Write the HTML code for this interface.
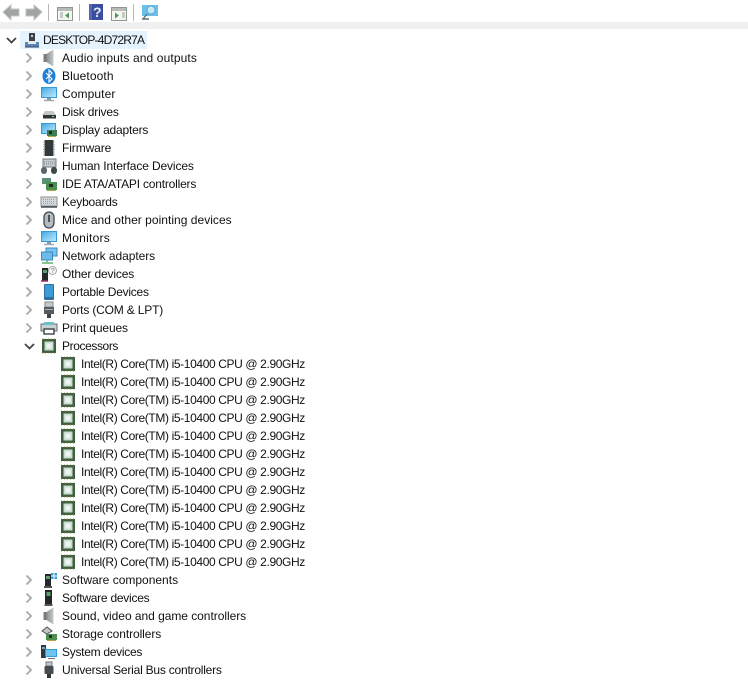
<!DOCTYPE html>
<html><head><meta charset="utf-8">
<style>
html,body{margin:0;padding:0;background:#fff;width:748px;height:693px;overflow:hidden}
body{position:relative;font-family:"Liberation Sans",sans-serif;font-size:12px;color:#111}
.t{position:absolute;height:18px;line-height:18px;white-space:nowrap}
.c{letter-spacing:-.375px}
svg{position:absolute;overflow:visible}
.i{width:18px;height:18px}
</style></head><body>
<svg width="0" height="0" style="position:absolute">
<defs>
<linearGradient id="blue" x1="0" y1="0" x2="1" y2="1"><stop offset="0" stop-color="#45a9e4"/><stop offset=".6" stop-color="#8fd2f4"/><stop offset="1" stop-color="#bfe6f8"/></linearGradient>
<linearGradient id="spk" x1="0" y1="0" x2="1" y2="0"><stop offset="0" stop-color="#8b9093"/><stop offset="1" stop-color="#c8cbcd"/></linearGradient>
<symbol id="chev" viewBox="0 0 10 18"><path d="M2.500 4.500l4.500 4.500-4.500 4.500" fill="none" stroke="#a8a8a8" stroke-width="1.800"/></symbol>
<symbol id="chevd" viewBox="0 0 14 18"><path d="M2 7l4.500 4.500L11 7" fill="none" stroke="#444" stroke-width="1.800"/></symbol>
<symbol id="cpu" viewBox="0 0 18 18"><rect x="2" y="2" width="14" height="14" fill="#3f5f3e"/><rect x="4.500" y="4.500" width="9" height="9" fill="#c9ddd2"/><rect x="6.500" y="6.500" width="5" height="5" fill="#eef5f0"/><path d="M2.500 1.500v1M5.500 1.500v1M8.500 1.500v1M11.500 1.500v1M14.500 1.500v1M2.500 15.500v1M5.500 15.500v1M8.500 15.500v1M11.500 15.500v1M14.500 15.500v1" stroke="#8a8a50"/></symbol>
<symbol id="speaker" viewBox="0 0 18 18"><path d="M3.500 5h3v8h-3z" fill="#777c7f"/><path d="M6.500 5l6-4h1v16h-1l-6-4z" fill="url(#spk)"/></symbol>
<symbol id="mon" viewBox="0 0 18 18"><rect x="1" y="2" width="16" height="11" fill="#3a98d2"/><rect x="2" y="3" width="14" height="9" fill="url(#blue)"/><path d="M7 13h4v2H7z" fill="#8a9aa4"/><path d="M4 15.500h10" stroke="#9aa8b0" stroke-width="1.400"/></symbol>
<symbol id="soft" viewBox="0 0 18 18"><rect x="5" y="1" width="7" height="14" fill="#23282a"/><rect x="6.500" y="3" width="4" height="4" fill="#5c9e6e"/><rect x="4.500" y="15" width="8" height="2" fill="#55595b"/></symbol>
</defs></svg>

<!-- toolbar -->
<div style="position:absolute;left:0;top:22px;width:748px;height:7px;background:#f0f0f0"></div>
<svg style="left:0;top:0" width="180" height="24">
<path d="M3 12l8-7v4h8v7h-8v4z" fill="#a0a3a3" stroke="#c4c6c6"/>
<path d="M42 12l-8-7v4h-8v7h8v4z" fill="#a0a3a3" stroke="#c4c6c6"/>
<path d="M48.500 4v17M79.500 4v17M133.500 4v17" stroke="#b8b8b8"/>
<rect x="57.500" y="7.500" width="15" height="13" fill="#f4f6f2" stroke="#8f9590"/><rect x="58" y="8" width="14" height="3" fill="#b9bdb9"/>
<path d="M60 13h3M60 15h3M60 17h3" stroke="#9aa09a"/><path d="M69 12.500v6l-4-3z" fill="#4f9a58"/>
<rect x="89" y="4" width="14" height="16" fill="#3a4e9e"/><rect x="89" y="4" width="3" height="16" fill="#5468b4"/>
<text x="93" y="17" font-family="Liberation Sans,sans-serif" font-size="14" font-weight="bold" fill="#e6ecf8">?</text>
<rect x="111.500" y="7.500" width="15" height="13" fill="#f4f6f2" stroke="#8f9590"/><rect x="112" y="8" width="14" height="3" fill="#b9bdb9"/>
<path d="M122 13h3M122 15h3M122 17h3" stroke="#9aa09a"/><path d="M115 12.500v6l4-3z" fill="#4f9a58"/>
<rect x="142" y="5" width="16" height="11" fill="#6cbfe8"/><circle cx="151" cy="10" r="4" fill="#c8e8f6" stroke="#5aa8d0"/><path d="M147 14l-4 5M142 19h7" stroke="#5c7478" stroke-width="1.400"/>
</svg>

<!-- root -->
<div style="position:absolute;left:20px;top:31px;width:127px;height:18px;background:#e5f3ff"></div>
<svg style="left:5px;top:31px" width="14" height="18"><use href="#chevd"/></svg>
<svg class="i" style="left:23px;top:31px" viewBox="0 0 18 18"><rect x="6" y="2" width="6" height="8" fill="#3a4246"/><rect x="8" y="4" width="2" height="2" fill="#c8ccce"/><rect x="2" y="11" width="14" height="5" fill="#5b87b8"/><rect x="5" y="10" width="8" height="3" fill="#e6e8ea"/><path d="M2 16h14" stroke="#2f4660"/></svg>
<div class="t" style="left:43px;top:31px;letter-spacing:-.8px">DESKTOP-4D72R7A</div>

<svg style="left:24px;top:49px" width="10" height="18"><use href="#chev"/></svg><svg class="i" style="left:40px;top:49px"><use href="#speaker" width="18" height="18"/></svg><div class="t" style="left:62px;top:49px;letter-spacing:.12px">Audio inputs and outputs</div>
<svg style="left:24px;top:67px" width="10" height="18"><use href="#chev"/></svg><svg class="i" style="left:40px;top:67px" viewBox="0 0 18 18"><ellipse cx="9" cy="9" rx="6.500" ry="8" fill="#1f80d6"/><path d="M6 6l6 6-3 3V3l3 3-6 6" fill="none" stroke="#fff" stroke-width="1.100"/></svg><div class="t" style="left:62px;top:67px;letter-spacing:.1px">Bluetooth</div>
<svg style="left:24px;top:85px" width="10" height="18"><use href="#chev"/></svg><svg class="i" style="left:40px;top:85px"><use href="#mon" width="18" height="18"/></svg><div class="t" style="left:62px;top:85px;letter-spacing:.1px">Computer</div>
<svg style="left:24px;top:103px" width="10" height="18"><use href="#chev"/></svg><svg class="i" style="left:40px;top:103px" viewBox="0 0 18 18"><path d="M5 8h8l3 4H2z" fill="#c2c6c8"/><rect x="3" y="12" width="13" height="3.500" fill="#2f3436"/><rect x="12" y="13" width="2" height="1" fill="#7fdc7f"/></svg><div class="t" style="left:62px;top:103px;letter-spacing:-.18px">Disk drives</div>
<svg style="left:24px;top:121px" width="10" height="18"><use href="#chev"/></svg><svg class="i" style="left:40px;top:121px" viewBox="0 0 18 18"><rect x="1" y="2" width="15" height="11" fill="#3a98d2"/><rect x="2" y="3" width="13" height="9" fill="url(#blue)"/><rect x="7" y="9" width="10" height="6" fill="#3f7d4e"/><path d="M8 15.500h8" stroke="#b5a84a"/><rect x="9" y="10" width="3" height="3" fill="#1e2d24"/></svg><div class="t" style="left:62px;top:121px;letter-spacing:-.2px">Display adapters</div>
<svg style="left:24px;top:139px" width="10" height="18"><use href="#chev"/></svg><svg class="i" style="left:40px;top:139px" viewBox="0 0 18 18"><rect x="4.500" y="1" width="9" height="16" fill="#33393b"/><path d="M3 3h2M3 5.500h2M3 8h2M3 10.500h2M3 13h2M3 15.500h2M13 3h2M13 5.500h2M13 8h2M13 10.500h2M13 13h2M13 15.500h2" stroke="#a8acae"/></svg><div class="t" style="left:62px;top:139px;letter-spacing:-.1px">Firmware</div>
<svg style="left:24px;top:157px" width="10" height="18"><use href="#chev"/></svg><svg class="i" style="left:40px;top:157px" viewBox="0 0 18 18"><rect x="3" y="2" width="13" height="8" fill="#c5cbce" stroke="#70787c"/><path d="M4 5h11M4 7h11" stroke="#858c90" stroke-dasharray="1 1"/><rect x="1" y="10" width="6" height="7" rx="3" fill="#5d666b"/><rect x="11" y="10" width="6" height="7" rx="3" fill="#3f474b"/></svg><div class="t" style="left:62px;top:157px;letter-spacing:-.13px">Human Interface Devices</div>
<svg style="left:24px;top:175px" width="10" height="18"><use href="#chev"/></svg><svg class="i" style="left:40px;top:175px" viewBox="0 0 18 18"><rect x="2" y="3" width="9" height="6" fill="#5b8f7a"/><rect x="6" y="7" width="11" height="8" fill="#4c8f4e"/><rect x="9" y="9" width="4" height="3" fill="#1f2b22"/><path d="M7 15.500h9" stroke="#b7a640"/></svg><div class="t" style="left:62px;top:175px;letter-spacing:-.2px">IDE ATA/ATAPI controllers</div>
<svg style="left:24px;top:193px" width="10" height="18"><use href="#chev"/></svg><svg class="i" style="left:40px;top:193px" viewBox="0 0 18 18"><rect x="1" y="4" width="16" height="9" fill="#d4d8da" stroke="#8b9295"/><path d="M3 6.500h12M3 8.500h12M3 10.500h12" stroke="#9aa0a3" stroke-dasharray="1 1"/><path d="M1 14h16" stroke="#3f4548" stroke-width="1.400"/></svg><div class="t" style="left:62px;top:193px;letter-spacing:-.2px">Keyboards</div>
<svg style="left:24px;top:211px" width="10" height="18"><use href="#chev"/></svg><svg class="i" style="left:40px;top:211px" viewBox="0 0 18 18"><rect x="4" y="1" width="10" height="16" rx="5" fill="#b4bcc1" stroke="#3f484d" stroke-width="1.300"/><rect x="8" y="4" width="2" height="7" fill="#4a5459"/></svg><div class="t" style="left:62px;top:211px;letter-spacing:.03px">Mice and other pointing devices</div>
<svg style="left:24px;top:229px" width="10" height="18"><use href="#chev"/></svg><svg class="i" style="left:40px;top:229px"><use href="#mon" width="18" height="18"/></svg><div class="t" style="left:62px;top:229px;letter-spacing:.25px">Monitors</div>
<svg style="left:24px;top:247px" width="10" height="18"><use href="#chev"/></svg><svg class="i" style="left:40px;top:247px" viewBox="0 0 18 18"><rect x="6" y="1" width="11" height="8" fill="#7cc4ec" stroke="#3a8cc0"/><rect x="1.500" y="5" width="11" height="8" fill="#6bbce8" stroke="#3a8cc0"/><path d="M7 13v2M2 16h11" stroke="#5fb06a" stroke-width="1.500"/></svg><div class="t" style="left:62px;top:247px;letter-spacing:-.06px">Network adapters</div>
<svg style="left:24px;top:265px" width="10" height="18"><use href="#chev"/></svg><svg class="i" style="left:40px;top:265px" viewBox="0 0 18 18"><rect x="2" y="3" width="6" height="13" fill="#23282a"/><rect x="3" y="5" width="4" height="3" fill="#5c9e6e"/><path d="M1 16h7" stroke="#9a2f6a" stroke-width="1.500"/><circle cx="12.500" cy="5.500" r="4" fill="#f6f6f6" stroke="#a2a6a8"/><text x="10.800" y="8" font-family="Liberation Sans,sans-serif" font-size="7" fill="#7a7e80">?</text></svg><div class="t" style="left:62px;top:265px;letter-spacing:-.15px">Other devices</div>
<svg style="left:24px;top:283px" width="10" height="18"><use href="#chev"/></svg><svg class="i" style="left:40px;top:283px" viewBox="0 0 18 18"><rect x="4" y="1" width="10" height="16" rx="1" fill="#2f6f9c"/><rect x="5" y="2" width="8" height="12" fill="#3d9bd8"/></svg><div class="t" style="left:62px;top:283px;letter-spacing:-.25px">Portable Devices</div>
<svg style="left:24px;top:301px" width="10" height="18"><use href="#chev"/></svg><svg class="i" style="left:40px;top:301px" viewBox="0 0 18 18"><rect x="5" y="1" width="8" height="5" fill="#c6cacc" stroke="#80868a"/><rect x="4" y="6" width="10" height="7" fill="#555b5e"/><rect x="7" y="13" width="4" height="4" fill="#3d4346"/><path d="M5 8.500h8" stroke="#aab0b3"/></svg><div class="t" style="left:62px;top:301px;letter-spacing:-.17px">Ports (COM &amp; LPT)</div>
<svg style="left:24px;top:319px" width="10" height="18"><use href="#chev"/></svg><svg class="i" style="left:40px;top:319px" viewBox="0 0 18 18"><rect x="1" y="5" width="16" height="7" fill="#c7d0d4" stroke="#656d71"/><rect x="4" y="3" width="10" height="3" fill="#6fc0c8"/><rect x="4" y="10" width="10" height="5" fill="#fff" stroke="#2f3638" stroke-width="1.300"/></svg><div class="t" style="left:62px;top:319px;letter-spacing:-.12px">Print queues</div>

<svg style="left:23px;top:337px" width="14" height="18"><use href="#chevd"/></svg><svg class="i" style="left:40px;top:337px"><use href="#cpu" width="18" height="18"/></svg><div class="t" style="left:62px;top:337px;letter-spacing:-.4px">Processors</div>
<svg class="i" style="left:59px;top:355px"><use href="#cpu" width="18" height="18"/></svg><div class="t c" style="left:81px;top:355px">Intel(R) Core(TM) i5-10400 CPU @ 2.90GHz</div>
<svg class="i" style="left:59px;top:373px"><use href="#cpu" width="18" height="18"/></svg><div class="t c" style="left:81px;top:373px">Intel(R) Core(TM) i5-10400 CPU @ 2.90GHz</div>
<svg class="i" style="left:59px;top:391px"><use href="#cpu" width="18" height="18"/></svg><div class="t c" style="left:81px;top:391px">Intel(R) Core(TM) i5-10400 CPU @ 2.90GHz</div>
<svg class="i" style="left:59px;top:409px"><use href="#cpu" width="18" height="18"/></svg><div class="t c" style="left:81px;top:409px">Intel(R) Core(TM) i5-10400 CPU @ 2.90GHz</div>
<svg class="i" style="left:59px;top:427px"><use href="#cpu" width="18" height="18"/></svg><div class="t c" style="left:81px;top:427px">Intel(R) Core(TM) i5-10400 CPU @ 2.90GHz</div>
<svg class="i" style="left:59px;top:445px"><use href="#cpu" width="18" height="18"/></svg><div class="t c" style="left:81px;top:445px">Intel(R) Core(TM) i5-10400 CPU @ 2.90GHz</div>
<svg class="i" style="left:59px;top:463px"><use href="#cpu" width="18" height="18"/></svg><div class="t c" style="left:81px;top:463px">Intel(R) Core(TM) i5-10400 CPU @ 2.90GHz</div>
<svg class="i" style="left:59px;top:481px"><use href="#cpu" width="18" height="18"/></svg><div class="t c" style="left:81px;top:481px">Intel(R) Core(TM) i5-10400 CPU @ 2.90GHz</div>
<svg class="i" style="left:59px;top:499px"><use href="#cpu" width="18" height="18"/></svg><div class="t c" style="left:81px;top:499px">Intel(R) Core(TM) i5-10400 CPU @ 2.90GHz</div>
<svg class="i" style="left:59px;top:517px"><use href="#cpu" width="18" height="18"/></svg><div class="t c" style="left:81px;top:517px">Intel(R) Core(TM) i5-10400 CPU @ 2.90GHz</div>
<svg class="i" style="left:59px;top:535px"><use href="#cpu" width="18" height="18"/></svg><div class="t c" style="left:81px;top:535px">Intel(R) Core(TM) i5-10400 CPU @ 2.90GHz</div>
<svg class="i" style="left:59px;top:553px"><use href="#cpu" width="18" height="18"/></svg><div class="t c" style="left:81px;top:553px">Intel(R) Core(TM) i5-10400 CPU @ 2.90GHz</div>

<svg style="left:24px;top:571px" width="10" height="18"><use href="#chev"/></svg><svg class="i" style="left:40px;top:571px" viewBox="0 0 18 18"><rect x="5" y="3" width="6" height="13" fill="#23282a"/><rect x="6" y="5" width="4" height="3" fill="#5c9e6e"/><rect x="4" y="15" width="8" height="2" fill="#4f5558"/><path d="M11 2h6v6h-6z" fill="#3a9ed8"/><path d="M14 2v6M11 5h6" stroke="#fff"/></svg><div class="t" style="left:62px;top:571px">Software components</div>
<svg style="left:24px;top:589px" width="10" height="18"><use href="#chev"/></svg><svg class="i" style="left:40px;top:589px"><use href="#soft" width="18" height="18"/></svg><div class="t" style="left:62px;top:589px;letter-spacing:-.25px">Software devices</div>
<svg style="left:24px;top:607px" width="10" height="18"><use href="#chev"/></svg><svg class="i" style="left:40px;top:607px"><use href="#speaker" width="18" height="18"/></svg><div class="t" style="left:62px;top:607px;letter-spacing:-.04px">Sound, video and game controllers</div>
<svg style="left:24px;top:625px" width="10" height="18"><use href="#chev"/></svg><svg class="i" style="left:40px;top:625px" viewBox="0 0 18 18"><path d="M2 6l5-4 5 4-5 3z" fill="#c2c6c8" stroke="#4d5356"/><rect x="6" y="9" width="11" height="6" fill="#4c8f4e"/><rect x="9" y="10" width="3" height="3" fill="#1f2b22"/><path d="M7 15.500h9" stroke="#b7a640"/></svg><div class="t" style="left:62px;top:625px;letter-spacing:-.08px">Storage controllers</div>
<svg style="left:24px;top:643px" width="10" height="18"><use href="#chev"/></svg><svg class="i" style="left:40px;top:643px" viewBox="0 0 18 18"><rect x="1" y="2" width="5" height="13" fill="#30383c"/><rect x="2" y="4" width="3" height="2" fill="#6db0d0"/><rect x="5" y="6" width="12" height="8" fill="#2f9cdc"/><rect x="6" y="7" width="10" height="6" fill="#6cc4f0"/><path d="M8 15.500h7" stroke="#6a7478"/></svg><div class="t" style="left:62px;top:643px;letter-spacing:-.28px">System devices</div>
<svg style="left:24px;top:661px" width="10" height="18"><use href="#chev"/></svg><svg class="i" style="left:40px;top:661px" viewBox="0 0 18 18"><rect x="6" y="1" width="6" height="4" fill="#c2c6c8" stroke="#70767a"/><rect x="4.500" y="5" width="9" height="8" rx="1" fill="#474d50"/><rect x="7" y="13" width="4" height="4" fill="#33383b"/></svg><div class="t" style="left:62px;top:661px;letter-spacing:-.22px">Universal Serial Bus controllers</div>
</body></html>
